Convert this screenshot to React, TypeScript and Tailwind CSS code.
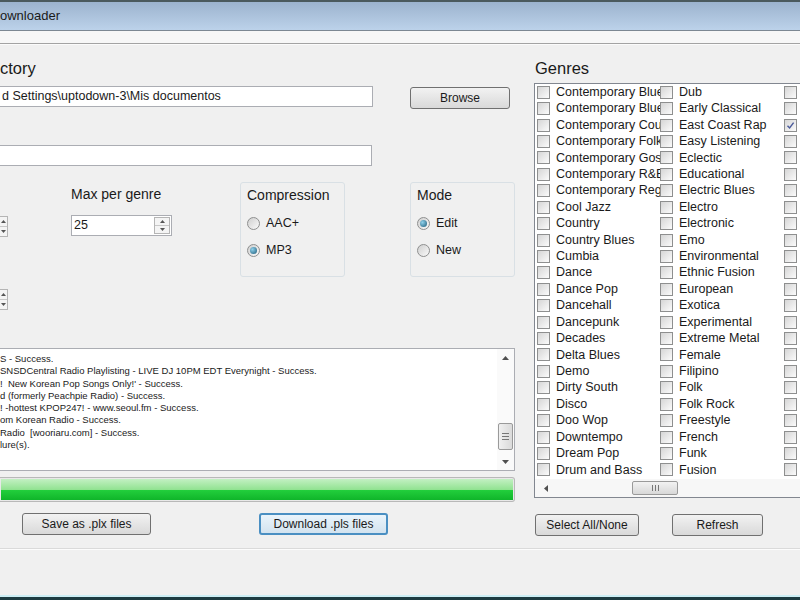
import type { ReactNode } from "react";

const COL1 = [
  "Contemporary Blues", "Contemporary Bluegrass", "Contemporary Country", "Contemporary Folk",
  "Contemporary Gospel", "Contemporary R&B", "Contemporary Reggae", "Cool Jazz", "Country",
  "Country Blues", "Cumbia", "Dance", "Dance Pop", "Dancehall", "Dancepunk", "Decades",
  "Delta Blues", "Demo", "Dirty South", "Disco", "Doo Wop", "Downtempo", "Dream Pop", "Drum and Bass",
];

const COL2 = [
  "Dub", "Early Classical", "East Coast Rap", "Easy Listening", "Eclectic", "Educational",
  "Electric Blues", "Electro", "Electronic", "Emo", "Environmental", "Ethnic Fusion", "European",
  "Exotica", "Experimental", "Extreme Metal", "Female", "Filipino", "Folk", "Folk Rock",
  "Freestyle", "French", "Funk", "Fusion",
];

const LOG = [
  "S - Success.",
  "SNSDCentral Radio Playlisting - LIVE DJ 10PM EDT Everynight - Success.",
  "!  New Korean Pop Songs Only!' - Success.",
  "d (formerly Peachpie Radio) - Success.",
  "! -hottest KPOP247! - www.seoul.fm - Success.",
  "om Korean Radio - Success.",
  "Radio  [wooriaru.com] - Success.",
  "lure(s).",
];

function Check({ on }: { on?: boolean }) {
  return (
    <span className="w-[13px] h-[13px] shrink-0 border border-[#8e8f8f] bg-gradient-to-br from-[#d6d6d6] to-[#fbfbfb] flex items-center justify-center">
      {on && (
        <svg width="9" height="9" viewBox="0 0 9 9">
          <path d="M1.5 4.8 L3.6 7 L7.6 1.6" fill="none" stroke="#4a5a9a" strokeWidth="1.4" />
        </svg>
      )}
    </span>
  );
}

function Radio({ on, label }: { on?: boolean; label: string }) {
  return (
    <div className="flex items-center h-[27px]">
      <span className="w-[13px] h-[13px] rounded-full border border-[#8e8f8f] bg-gradient-to-br from-[#cfcfcf] to-[#fafafa] flex items-center justify-center">
        {on && <span className="w-[7px] h-[7px] rounded-full bg-[radial-gradient(circle_at_35%_35%,#8fd0ea,#1d5c7a)]" />}
      </span>
      <span className="ml-[6px] text-[12.5px] text-[#1a1a1a]">{label}</span>
    </div>
  );
}

function Btn({ children, className }: { children: ReactNode; className: string }) {
  return (
    <div className={`h-[22px] rounded-[3px] flex items-center justify-center text-[12px] text-[#1a1a1a] ${className}`}>
      {children}
    </div>
  );
}

function SpinArrows({ className }: { className: string }) {
  return (
    <div className={`flex flex-col border border-[#b5b5b5] bg-[#f4f4f4] ${className}`}>
      <div className="flex-1 flex items-center justify-center border-b border-[#c8c8c8]">
        <svg width="5" height="3" viewBox="0 0 5 3"><path d="M0 3 L2.5 0 L5 3Z" fill="#555" /></svg>
      </div>
      <div className="flex-1 flex items-center justify-center">
        <svg width="5" height="3" viewBox="0 0 5 3"><path d="M0 0 L2.5 3 L5 0Z" fill="#555" /></svg>
      </div>
    </div>
  );
}

function GroupBox({ title, children }: { title: string; children: ReactNode }) {
  return (
    <div className="w-[105px] h-[95px] rounded-[3px] border border-[#d9e0e5] pl-[6px] pt-[4px]">
      <div className="text-[14px] leading-[17px] text-[#1a1a1a]">{title}</div>
      <div className="mt-[6px]">{children}</div>
    </div>
  );
}

export default function App() {
  return (
    <div className="w-[800px] h-[600px] overflow-hidden bg-[#f0f0f0] font-['Liberation_Sans',Arial,sans-serif] flex flex-col">
      {/* window caption */}
      <div className="h-[2px] bg-[#4b5a5e]" />
      <div className="h-[28px] bg-gradient-to-b from-[#9cb3ce] to-[#bcd2ea] flex items-center text-[13px] text-[#1a1a1a]">
        ownloader
      </div>
      <div className="h-px bg-[#7d8893]" />
      <div className="h-[12px] bg-[#f7f7f7]" />
      <div className="h-px bg-[#a3a3a3]" />
      <div className="h-px bg-[#fbfbfb]" />

      <div className="flex-1 flex flex-col overflow-hidden">
        <div className="flex">
          {/* left side */}
          <div className="w-[515px] flex flex-col">
            <div className="mt-[13px] h-[20px] leading-[20px] text-[16.5px] text-[#1a1a1a]">ctory</div>
            <div className="mt-[8px] flex items-start">
              <div className="w-[373px] h-[21px] bg-white border border-[#abadb3] border-l-0 flex items-center text-[12.5px] text-[#1a1a1a] pl-[2px]">
                d Settings\uptodown-3\Mis documentos
              </div>
              <Btn className="ml-[37px] mt-px w-[100px] border border-[#707070] bg-gradient-to-b from-[#f2f2f2] to-[#d9d9d9]">Browse</Btn>
            </div>
            <div className="mt-[36px] w-[372px] h-[21px] bg-white border border-[#abadb3] border-l-0" />

            <div className="mt-[16px] h-[130px] flex items-start">
              <div className="w-[71px] flex flex-col">
                <SpinArrows className="mt-[34px] w-[8px] h-[21px] border-l-0" />
                <SpinArrows className="mt-[52px] w-[8px] h-[21px] border-l-0" />
              </div>
              <div className="w-[169px] flex flex-col">
                <div className="mt-[4px] text-[14px] leading-[16px] text-[#1a1a1a]">Max per genre</div>
                <div className="mt-[13px] w-[101px] h-[21px] bg-white border border-[#abadb3] flex items-stretch">
                  <div className="flex-1 flex items-center pl-[2px] text-[12.5px] text-[#1a1a1a]">25</div>
                  <SpinArrows className="w-[16px] m-px" />
                </div>
              </div>
              <GroupBox title="Compression">
                <Radio label="AAC+" />
                <Radio label="MP3" on />
              </GroupBox>
              <div className="ml-[65px]">
                <GroupBox title="Mode">
                  <Radio label="Edit" on />
                  <Radio label="New" />
                </GroupBox>
              </div>
            </div>

            {/* log */}
            <div className="mt-[36px] h-[123px] bg-white border border-[#abadb3] border-l-0 flex">
              <div className="flex-1 pt-[4px] text-[9.5px] leading-[12.3px] text-[#1a1a1a] whitespace-pre overflow-hidden">
                {LOG.map((l, i) => (
                  <div key={i}>{l}</div>
                ))}
              </div>
              <div className="w-[17px] flex flex-col items-center bg-[#fafafa]">
                <div className="h-[17px] flex items-center justify-center">
                  <svg width="7" height="4" viewBox="0 0 7 4"><path d="M0 4 L3.5 0 L7 4Z" fill="#505050" /></svg>
                </div>
                <div className="mt-[57px] w-[15px] h-[27px] rounded-[2px] border border-[#9a9a9a] bg-gradient-to-r from-[#f0f0f0] to-[#dadada] flex flex-col items-center justify-center gap-[2px]">
                  <div className="w-[7px] h-px bg-[#777]" />
                  <div className="w-[7px] h-px bg-[#777]" />
                  <div className="w-[7px] h-px bg-[#777]" />
                </div>
                <div className="mt-auto h-[17px] flex items-center justify-center">
                  <svg width="7" height="4" viewBox="0 0 7 4"><path d="M0 0 L3.5 4 L7 0Z" fill="#505050" /></svg>
                </div>
              </div>
            </div>

            {/* progress */}
            <div className="mt-[6px] h-[25px] border border-[#b8b8b8] border-l-0 rounded-r-[3px] p-px bg-[#e8e8e8] flex flex-col overflow-hidden">
              <div className="h-[11px] bg-gradient-to-b from-[#c2f0c2] to-[#8fe28f]" />
              <div className="flex-1 bg-gradient-to-b from-[#22cf3c] to-[#0fb52a]" />
            </div>

            <div className="mt-[11px] flex">
              <Btn className="ml-[22px] w-[129px] border border-[#707070] bg-gradient-to-b from-[#f2f2f2] to-[#d9d9d9]">Save as .plx files</Btn>
              <Btn className="ml-[108px] w-[129px] border-2 border-[#4a8fc2] bg-gradient-to-b from-[#eaf4fb] to-[#d3e3ef]">Download .pls files</Btn>
            </div>
          </div>

          {/* right side */}
          <div className="ml-[19px] flex-1 flex flex-col overflow-hidden">
            <div className="mt-[13px] h-[20px] leading-[20px] text-[16.5px] text-[#1a1a1a] pl-px">Genres</div>
            <div className="mt-[5px] w-[300px] h-[415px] bg-white border border-[#828790] border-r-0 flex flex-col">
              <div className="flex pl-[2px]">
                <div className="w-[123px] overflow-hidden">
                  {COL1.map((g) => (
                    <div key={g} className="h-[16.43px] flex items-center whitespace-nowrap">
                      <Check />
                      <span className="ml-[6px] text-[12.5px] text-[#1a1a1a]">{g}</span>
                    </div>
                  ))}
                </div>
                <div className="w-[124px] overflow-hidden">
                  {COL2.map((g) => (
                    <div key={g} className="h-[16.43px] flex items-center whitespace-nowrap">
                      <Check />
                      <span className="ml-[6px] text-[12.5px] text-[#1a1a1a]">{g}</span>
                    </div>
                  ))}
                </div>
                <div className="w-[40px]">
                  {COL2.map((g, i) => (
                    <div key={g} className="h-[16.43px] flex items-center">
                      <Check on={i === 2} />
                    </div>
                  ))}
                </div>
              </div>
              <div className="mt-auto h-[18px] bg-[#f7f7f7] flex items-center">
                <div className="w-[17px] flex items-center justify-center ml-[2px]">
                  <svg width="4" height="7" viewBox="0 0 4 7"><path d="M4 0 L0 3.5 L4 7Z" fill="#505050" /></svg>
                </div>
                <div className="ml-[78px] w-[46px] h-[14px] rounded-[2px] border border-[#9a9a9a] bg-gradient-to-b from-[#f2f2f2] to-[#d8d8d8] flex items-center justify-center gap-[2px]">
                  <div className="w-px h-[6px] bg-[#777]" />
                  <div className="w-px h-[6px] bg-[#777]" />
                  <div className="w-px h-[6px] bg-[#777]" />
                </div>
              </div>
            </div>
            <div className="mt-[16px] flex">
              <Btn className="ml-px w-[104px] border border-[#707070] bg-gradient-to-b from-[#f2f2f2] to-[#d9d9d9]">Select All/None</Btn>
              <Btn className="ml-[33px] w-[91px] border border-[#707070] bg-gradient-to-b from-[#f2f2f2] to-[#d9d9d9]">Refresh</Btn>
            </div>
          </div>
        </div>

        <div className="mt-[12px] h-px bg-[#dadada]" />
        <div className="h-px bg-[#fcfcfc]" />
      </div>

      <div className="h-[2px] bg-[#cdeef4]" />
      <div className="h-[3px] bg-[#1e3b41]" />
    </div>
  );
}
